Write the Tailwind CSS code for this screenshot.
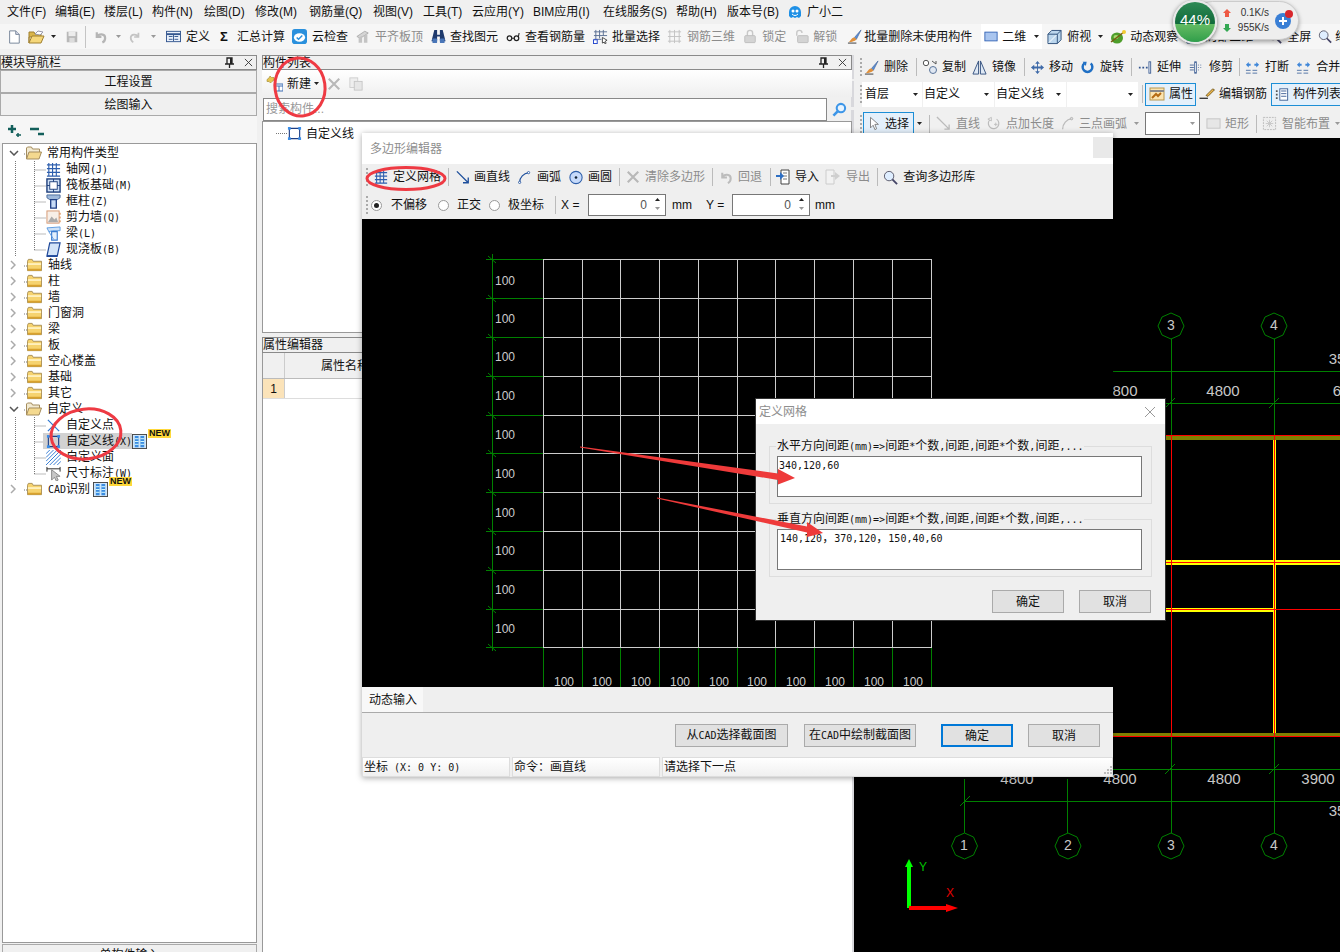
<!DOCTYPE html>
<html lang="zh">
<head>
<meta charset="utf-8">
<script src="https://cdn.jsdelivr.net/npm/@tailwindcss/browser@4"></script>
<title>GTJ</title>
</head>
<body class="m-0">
<svg class="absolute w-0 h-0" aria-hidden="true">
<defs>
<symbol id="doc" viewBox="0 0 16 16"><path d="M3 1h7l4 4v10H3z" fill="#fff" stroke="#6a7a90"/><path d="M10 1v4h4" fill="#dde" stroke="#6a7a90"/></symbol>
<symbol id="open" viewBox="0 0 17 16"><path d="M1 14V3h5l1 2h6v3H1z" fill="#d9b54a" stroke="#a08030"/><path d="M7 5l3-3 5 1-3 3z" fill="#fff" stroke="#99a"/><path d="M1 14l3-7h12l-3 7z" fill="#f5d77a" stroke="#a08030"/></symbol>
<symbol id="save" viewBox="0 0 16 16"><rect x="2" y="2" width="12" height="12" fill="#b8b8b8"/><rect x="4" y="2" width="8" height="5" fill="#ececec"/><rect x="5" y="9" width="6" height="5" fill="#dcdcdc"/></symbol>
<symbol id="undo" viewBox="0 0 14 16"><path d="M3 3v5h5M3 8c2-4 9-4 9 1 0 2-1 4-3 5" fill="none" stroke="#b5b5b5" stroke-width="2.4"/></symbol>
<symbol id="redo" viewBox="0 0 14 16"><path d="M11 3v5H6M11 8C9 4 2 4 2 9c0 2 1 4 3 5" fill="none" stroke="#c4c4c4" stroke-width="2"/></symbol>
<symbol id="def" viewBox="0 0 16 16"><rect x=".5" y="2.5" width="15" height="11" fill="#eaf1fb" stroke="#33568f"/><path d="M1 5.5h14" stroke="#33568f" stroke-width="2"/><path d="M3 8h4M3 11h4M9 8h4M9 11h4M8 6v7" stroke="#33568f"/></symbol>
<symbol id="cloud" viewBox="0 0 16 16"><rect width="16" height="16" rx="3" fill="#2a90dd"/><ellipse cx="8" cy="9" rx="6" ry="4.5" fill="#fff"/><path d="M5 9l2 2 4-4" fill="none" stroke="#2a90dd" stroke-width="1.6"/></symbol>
<symbol id="flat" viewBox="0 0 16 16"><path d="M1 8l9-6 4 2-9 6z" fill="#d5d5d5" stroke="#aaa"/><path d="M3 15V9l4-2v8zM9 15V7l4-2v10z" fill="#c4c4c4"/></symbol>
<symbol id="binoc" viewBox="0 0 17 16"><path d="M4 1h3v5h3V1h3l3 12h-6V8H7v5H1z" fill="#1f3a6d"/><rect x="2" y="10" width="5" height="5" rx="1" fill="#4a76b8"/><rect x="10" y="10" width="5" height="5" rx="1" fill="#4a76b8"/></symbol>
<symbol id="glass" viewBox="0 0 16 16"><circle cx="4" cy="10" r="2.6" fill="none" stroke="#222" stroke-width="1.4"/><circle cx="12" cy="10" r="2.6" fill="none" stroke="#222" stroke-width="1.4"/><path d="M6.5 10h3M14 9l1-5" stroke="#222" stroke-width="1.2"/></symbol>
<symbol id="batch" viewBox="0 0 16 16"><path d="M3 1v11M7 1v9M11 1v6M1 3h14M1 7h14M1 11h8" stroke="#5a6f92" fill="none"/><rect x="0.5" y="11.5" width="4" height="4" fill="#fff" stroke="#2244cc"/><path d="M10 9l5 3-2 1 1 2-1 1-1-2-2 1z" fill="#fff" stroke="#444"/></symbol>
<symbol id="rebar" viewBox="0 0 16 16"><path d="M1 3h14M1 8h14M1 13h14M3 1v14M8 1v14M13 1v14" stroke="#c2c2c2" fill="none"/></symbol>
<symbol id="lock" viewBox="0 0 16 16"><path d="M5 7V4a3 3 0 0 1 6 0v3" fill="none" stroke="#c8c8c8" stroke-width="1.6"/><rect x="2" y="7" width="12" height="8" rx="1" fill="#d4d4d4" stroke="#bbb"/></symbol>
<symbol id="unlock" viewBox="0 0 16 16"><path d="M2 7V4a3 3 0 0 1 6 0" fill="none" stroke="#c8c8c8" stroke-width="1.6"/><rect x="3" y="7" width="12" height="8" rx="1" fill="#d4d4d4" stroke="#bbb"/></symbol>
<symbol id="brush" viewBox="0 0 16 16"><path d="M15 1L8 9l2 2z" fill="#5b8fd6" stroke="#34568f" stroke-width=".6"/><path d="M8 9c-3 0-4 3-6 5 3 0 7-1 8-3z" fill="#e0903a"/><path d="M1 15h9" stroke="#333"/></symbol>
<symbol id="rect2d" viewBox="0 0 16 16"><rect x="1" y="3" width="14" height="10" fill="#a9c5ef" stroke="#2f5fb3"/></symbol>
<symbol id="cube" viewBox="0 0 16 16"><path d="M1 5l4-4h10v10l-4 4H1z" fill="#bcd7ee" stroke="#2d4f7a"/><path d="M1 5h10v10M11 5l4-4" fill="none" stroke="#2d4f7a"/><path d="M2 14l8-8" stroke="#fff"/></symbol>
<symbol id="ball" viewBox="0 0 16 16"><ellipse cx="7" cy="9" rx="6" ry="5.5" fill="#4f9e2c"/><ellipse cx="6" cy="8" rx="2.5" ry="2" fill="#a6dd6e"/><path d="M1 13L14 3" stroke="#7a5a14" stroke-width="1.5"/><circle cx="14" cy="3" r="2" fill="#f2cc33"/></symbol>
<symbol id="mag" viewBox="0 0 16 16"><circle cx="6.500" cy="6.500" r="5" fill="#dfeeff" stroke="#556"/><path d="M10 10l5 5" stroke="#446" stroke-width="2"/></symbol>
<symbol id="magb" viewBox="0 0 16 16"><circle cx="9.500" cy="6.500" r="4.500" fill="#e8f4ff" stroke="#3d96e8" stroke-width="2.2"/><path d="M6 10l-4.500 4.500" stroke="#3d96e8" stroke-width="2.800"/></symbol>
<symbol id="folder" viewBox="0 0 16 14"><path d="M.5 13V3l1-2h4l1 2h9v10z" fill="#f6d36f" stroke="#a98f55"/><path d="M1 5h14v2H1z" fill="#fff0bd"/><path d="M1 11h14v2H1z" fill="#d9a22e"/></symbol>
<symbol id="fopen" viewBox="0 0 16 14"><path d="M.5 13V2l1-1h4l1 2h7v3" fill="#f2ead2" stroke="#a58d5e"/><path d="M.5 13L3 6h12.500L13 13z" fill="#f4d98f" stroke="#a58d5e"/></symbol>
<symbol id="cline" viewBox="0 0 16 16"><path d="M2.500 2.500h11v11h-11z" fill="none" stroke="#1c3d84" stroke-width="1.200"/><path d="M1 1h3v3H1zM12 1h3v3h-3zM1 12h3v3H1zM12 12h3v3h-3z" fill="#3c8fe8"/></symbol>
<symbol id="bars" viewBox="0 0 16 16"><rect x=".5" y=".5" width="15" height="15" fill="#cfe6fb" stroke="#444"/><path d="M3 2h4v12H3zM9 2h4v12H9z" fill="#3b8ce0"/><path d="M3 5h4M3 8h4M3 11h4M9 5h4M9 8h4M9 11h4" stroke="#dff" /></symbol>
<symbol id="grid" viewBox="0 0 16 16"><path d="M1 3h14M1 7h14M1 11h14M1 15h14M3 1v14M7 1v14M11 1v14" stroke="#2e5fae" stroke-width="1.200" fill="none"/></symbol>
<symbol id="cx" viewBox="0 0 16 16"><path d="M2 2l12 12M14 2L2 14" stroke="#b8b8b8" stroke-width="2.400"/></symbol>
<symbol id="cp" viewBox="0 0 16 16"><rect x="1" y="1" width="9" height="11" fill="#eee" stroke="#ccc"/><rect x="6" y="5" width="9" height="10" fill="#e6e6e6" stroke="#c4c4c4"/></symbol>
<symbol id="caret" viewBox="0 0 5 3"><path d="M0 0h5L2.500 3z" fill="#222"/></symbol>
<symbol id="caretg" viewBox="0 0 5 3"><path d="M0 0h5L2.500 3z" fill="#999"/></symbol>
<symbol id="pin" viewBox="0 0 10 12"><path d="M3 1h5v6H3zM1 7h9M5.500 7v4" fill="none" stroke="#222" stroke-width="1.300"/><path d="M6 1h2v6H6z" fill="#222"/></symbol>
<symbol id="close" viewBox="0 0 10 10"><path d="M1 1l8 8M9 1L1 9" stroke="#333"/></symbol>
<symbol id="copy2" viewBox="0 0 16 16"><circle cx="4" cy="4" r="2.700" fill="#fff" stroke="#555"/><circle cx="11" cy="11" r="3.500" fill="#dfe7f2" stroke="#5a7499"/><path d="M10 2l4 3M14 2v3" stroke="#555" fill="none"/></symbol>
<symbol id="mirror" viewBox="0 0 16 16"><path d="M7 1L1 15h6zM9 1l6 14H9z" fill="#dfe9f5" stroke="#35527f"/></symbol>
<symbol id="move" viewBox="0 0 16 16"><path d="M8 1l2.500 3h-2v3h3V5L15 8l-3.500 3V9h-3v3h2L8 15l-2.500-3h2V9h-3v2L1 8l3.500-3v2h3V4h-2z" fill="#3f6aa8"/></symbol>
<symbol id="rot" viewBox="0 0 16 16"><path d="M4 3a6 6 0 1 0 8 0" fill="none" stroke="#1f6fc4" stroke-width="3"/><path d="M2 1l5 0-1 5z" fill="#1f6fc4"/></symbol>
<symbol id="ext" viewBox="0 0 16 16"><path d="M1 7h2v2H1zM5 7h2v2H5zM9 7h2v2H9z" fill="#34568f"/><rect x="12.500" y="1.500" width="2" height="13" fill="#fff" stroke="#34568f"/></symbol>
<symbol id="trim" viewBox="0 0 16 16"><path d="M1 5h5M1 8h5M1 11h5M11 5h1M14 5h1M11 8h1M14 8h1M11 11h1" stroke="#34568f"/><rect x="7" y="1" width="2" height="14" fill="#fff" stroke="#34568f"/></symbol>
<symbol id="brk" viewBox="0 0 16 16"><path d="M1 11h14M1 14h14" stroke="#5173a5" stroke-dasharray="5 2"/><path d="M1 5l3-3v2h2v2H4v2zM15 5l-3-3v2h-2v2h2v2z" fill="#3f86d8"/></symbol>
<symbol id="attr" viewBox="0 0 16 16"><rect x="1" y="2" width="14" height="12" fill="#fbe4b0" stroke="#b7964f"/><path d="M1 5h14" stroke="#888" stroke-width="2"/><path d="M3 12l4-4 2 2 3-3" stroke="#b56b12" stroke-width="2" fill="none"/></symbol>
<symbol id="edit" viewBox="0 0 16 16"><path d="M14 2l-7 7 2 1 7-7z" fill="#efb74a" stroke="#775d20"/><path d="M0 12h9" stroke="#111" stroke-width="1.200"/></symbol>
<symbol id="list" viewBox="0 0 16 16"><rect x="5.500" y="1.500" width="9" height="13" fill="#fff" stroke="#33568f"/><path d="M7 4h6M7 7h6M7 10h6" stroke="#33568f"/><path d="M1 3h2v2H1zM1 7h2v2H1zM1 11h2v2H1z" fill="#555"/></symbol>
<symbol id="cursor" viewBox="0 0 16 16"><path d="M4 1v12l3-3 2 5 2-1-2-5h4z" fill="#fff" stroke="#777"/></symbol>
<symbol id="gline" viewBox="0 0 16 16"><path d="M1 1l13 13M14 9v5H9" fill="none" stroke="#bbb" stroke-width="1.400"/></symbol>
<symbol id="gpt" viewBox="0 0 16 16"><path d="M3 4a6 6 0 1 0 8-1" fill="none" stroke="#bbb" stroke-width="1.300"/><path d="M1 3l4-2v4zM8 9h4M10 7v4" stroke="#bbb" fill="none"/></symbol>
<symbol id="garc" viewBox="0 0 16 16"><path d="M2 15C2 8 7 3 13 2" fill="none" stroke="#bbb" stroke-width="1.600"/><circle cx="13" cy="2" r="1.500" fill="#ddd" stroke="#aaa"/></symbol>
<symbol id="grect" viewBox="0 0 16 16"><rect x="1" y="3" width="14" height="10" fill="#e6e6e6" stroke="#c4c4c4"/></symbol>
<symbol id="smart" viewBox="0 0 16 16"><rect x="1.500" y="1.500" width="13" height="13" fill="#eee" stroke="#bbb" stroke-dasharray="2 1"/><path d="M8 4v8M4 8h8M5 5l6 6M11 5l-6 6" stroke="#c8c8c8"/></symbol>
<symbol id="line" viewBox="0 0 16 16"><path d="M1 1l13 13M14 8v6H8" fill="none" stroke="#1e4f9c" stroke-width="1.500"/></symbol>
<symbol id="arc" viewBox="0 0 16 16"><path d="M2 14C2 8 7 3 13 2" fill="none" stroke="#1e4f9c" stroke-width="1.400"/><circle cx="13" cy="2" r="1.400" fill="#fff" stroke="#1e4f9c"/><circle cx="2" cy="14" r="1.400" fill="#fff" stroke="#1e4f9c"/></symbol>
<symbol id="circ" viewBox="0 0 16 16"><circle cx="8" cy="8" r="7" fill="#c6dafa" stroke="#2c5da8" stroke-width="1.200"/><circle cx="8" cy="8" r="1.500" fill="#123"/></symbol>
<symbol id="imp" viewBox="0 0 16 16"><path d="M6 1h8v14H6z" fill="#fff" stroke="#444"/><path d="M8 4h4M8 7h4M8 10h4" stroke="#777"/><path d="M1 6h4V3l4 4-4 4V8H1z" fill="#2e6fc4"/></symbol>
<symbol id="exp" viewBox="0 0 16 16"><path d="M1 1h8v14H1z" fill="#f2f2f2" stroke="#ccc"/><path d="M6 6h4V3l5 4-5 4V8H6z" fill="#cfcfcf"/></symbol>
<symbol id="gundo" viewBox="0 0 14 16"><path d="M3 3v5h5M3 8c2-4 9-4 9 1 0 2-1 4-3 5" fill="none" stroke="#bcbcbc" stroke-width="2.200"/></symbol>
</defs>
</svg>

<div class="relative w-[1340px] h-[952px] overflow-hidden flex flex-col bg-[#f0f0f0] text-[12px] leading-[16px] text-[#111] font-['Liberation_Sans','Noto_Sans_CJK_SC',sans-serif]">

  <!-- menu -->
  <nav class="h-[24px] shrink-0 flex items-center pl-[7px] whitespace-nowrap">
    <span class="w-[48px] shrink-0">文件(F)</span><span class="w-[49px] shrink-0">编辑(E)</span><span class="w-[48px] shrink-0">楼层(L)</span><span class="w-[52px] shrink-0">构件(N)</span><span class="w-[51px] shrink-0">绘图(D)</span><span class="w-[54px] shrink-0">修改(M)</span><span class="w-[64px] shrink-0">钢筋量(Q)</span><span class="w-[50px] shrink-0">视图(V)</span><span class="w-[49px] shrink-0">工具(T)</span><span class="w-[61px] shrink-0">云应用(Y)</span><span class="w-[70px] shrink-0">BIM应用(I)</span><span class="w-[73px] shrink-0">在线服务(S)</span><span class="w-[51px] shrink-0">帮助(H)</span><span class="w-[60px] shrink-0">版本号(B)</span>
    <svg class="w-[16px] h-[16px] shrink-0" viewBox="0 0 16 16"><path d="M2 8a6 6 0 0 1 12 0v4l-2 2-2-1-2 1-2-1-2 1-2-2z" fill="#1e90e6"/><circle cx="6" cy="7" r="1.500" fill="#fff"/><circle cx="10" cy="7" r="1.500" fill="#fff"/><path d="M5 10c2 2 4 2 6 0" stroke="#fff" fill="none"/></svg>
    <span class="ml-[4px]">广小二</span>
  </nav>

  <!-- main toolbar -->
  <div class="h-[25px] shrink-0 flex items-center bg-[#f6f6f6] whitespace-nowrap">
    <svg class="w-[14px] h-[16px] shrink-0 ml-[7px]"><use href="#doc"/></svg>
    <svg class="w-[17px] h-[16px] shrink-0 ml-[7px]"><use href="#open"/></svg>
    <svg class="w-[5px] h-[3px] shrink-0 ml-[6px]"><use href="#caret"/></svg>
    <svg class="w-[14px] h-[16px] shrink-0 ml-[9px]"><use href="#save"/></svg>
    <div class="w-px h-[22px] bg-[#c4c4c4] shrink-0 ml-[6px]"></div>
    <svg class="w-[13px] h-[16px] shrink-0 ml-[8px]"><use href="#undo"/></svg>
    <svg class="w-[5px] h-[3px] shrink-0 ml-[9px]"><use href="#caretg"/></svg>
    <svg class="w-[12px] h-[16px] shrink-0 ml-[8px]"><use href="#redo"/></svg>
    <svg class="w-[5px] h-[3px] shrink-0 ml-[10px]"><use href="#caretg"/></svg>
    <svg class="w-[15px] h-[15px] shrink-0 ml-[10px]"><use href="#def"/></svg><span class="ml-[5px]">定义</span>
    <span class="ml-[10px] w-[10px] shrink-0 font-bold text-[13px]">Σ</span><span class="ml-[7px]">汇总计算</span>
    <svg class="w-[15px] h-[15px] shrink-0 ml-[7px]"><use href="#cloud"/></svg><span class="ml-[5px]">云检查</span>
    <svg class="w-[14px] h-[15px] shrink-0 ml-[8px]"><use href="#flat"/></svg><span class="ml-[5px] text-[#8c8c8c]">平齐板顶</span>
    <svg class="w-[17px] h-[15px] shrink-0 ml-[7px]"><use href="#binoc"/></svg><span class="ml-[3px]">查找图元</span>
    <svg class="w-[14px] h-[15px] shrink-0 ml-[8px]"><use href="#glass"/></svg><span class="ml-[5px]">查看钢筋量</span>
    <svg class="w-[15px] h-[15px] shrink-0 ml-[8px]"><use href="#batch"/></svg><span class="ml-[4px]">批量选择</span>
    <svg class="w-[15px] h-[15px] shrink-0 ml-[7px]"><use href="#rebar"/></svg><span class="ml-[5px] text-[#8c8c8c]">钢筋三维</span>
    <svg class="w-[14px] h-[15px] shrink-0 ml-[8px]"><use href="#lock"/></svg><span class="ml-[5px] text-[#8c8c8c]">锁定</span>
    <svg class="w-[14px] h-[15px] shrink-0 ml-[9px]"><use href="#unlock"/></svg><span class="ml-[4px] text-[#8c8c8c]">解锁</span>
    <svg class="w-[15px] h-[15px] shrink-0 ml-[10px]"><use href="#brush"/></svg><span class="ml-[2px]">批量删除未使用构件</span>
    <div class="ml-[9px] w-[61px] h-[25px] shrink-0 bg-white flex items-center pl-[3px]">
      <svg class="w-[14px] h-[15px] shrink-0"><use href="#rect2d"/></svg><span class="ml-[4px]">二维</span>
      <svg class="w-[5px] h-[3px] shrink-0 ml-[8px]"><use href="#caret"/></svg>
    </div>
    <svg class="w-[15px] h-[16px] shrink-0 ml-[5px]"><use href="#cube"/></svg><span class="ml-[5px]">俯视</span>
    <svg class="w-[5px] h-[3px] shrink-0 ml-[7px]"><use href="#caret"/></svg>
    <svg class="w-[16px] h-[16px] shrink-0 ml-[7px]"><use href="#ball"/></svg><span class="ml-[4px]">动态观察</span>
    <svg class="w-[15px] h-[15px] shrink-0 ml-[8px]"><use href="#cube"/></svg><span class="ml-[4px]">局部三维</span>
    <svg class="w-[15px] h-[15px] shrink-0 ml-[14px]"><use href="#mag"/></svg><span class="ml-[5px]">全屏</span>
    <svg class="w-[14px] h-[15px] shrink-0 ml-[7px]"><use href="#mag"/></svg><span class="ml-[3px]">缩放</span>
  </div>

  <!-- body -->
  <div class="flex-1 min-h-0 flex pt-[6px]">

    <!-- left panel -->
    <aside class="w-[257px] shrink-0 flex flex-col min-h-0">
      <div class="h-[15px] shrink-0 border border-[#8a8a8a] flex items-center justify-between pr-[3px] whitespace-nowrap">
        <span>模块导航栏</span>
        <span class="flex items-center gap-[10px]"><svg class="w-[10px] h-[12px]"><use href="#pin"/></svg><svg class="w-[9px] h-[9px]"><use href="#close"/></svg></span>
      </div>
      <button class="h-[23px] shrink-0 border border-[#aaa] bg-[#f0f0f0]">工程设置</button>
      <button class="h-[23px] shrink-0 border border-[#aaa] bg-[#f0f0f0]">绘图输入</button>
      <div class="h-[27px] shrink-0 flex items-center gap-[6px] pl-[7px] bg-[#f6f6f6]">
        <svg class="w-[16px] h-[14px]" viewBox="0 0 16 14"><path d="M5 2v8M1 6h8" stroke="#135f5b" stroke-width="2.500"/><path d="M11 10v4M9 12h5" stroke="#135f5b" stroke-width="1.500"/></svg>
        <svg class="w-[16px] h-[14px]" viewBox="0 0 16 14"><path d="M1 6h9M9 11h6" stroke="#135f5b" stroke-width="2.500"/></svg>
      </div>
      <div class="relative flex-1 min-h-0 ml-[2px] bg-white border border-[#999] pt-[1px] whitespace-nowrap">
        <svg class="absolute left-0 top-0 w-[60px] h-[360px]" viewBox="0 0 60 360"><path d="M12.500 17V112M31.500 17V106M31.500 26H43M31.500 42H43M31.500 58H43M31.500 74H43M31.500 90H43M31.500 106H43M21 10H25M21 122H25M21 138H25M21 154H25M21 170H25M21 186H25M21 202H25M21 218H25M21 234H25M21 250H25M21 266H25M12.500 273V336M31.500 273V330M31.500 282H43M31.500 298H43M31.500 314H43M31.500 330H43M21 346H25" stroke="#777" stroke-dasharray="1 1" fill="none"/></svg>
        <div class="relative h-[16px] flex items-center pl-[6px]"><svg class="w-[10px] h-[6px] shrink-0" viewBox="0 0 10 6"><path d="M1 1l4 4 4-4" fill="none" stroke="#555" stroke-width="1.500"/></svg><svg class="w-[16px] h-[14px] shrink-0 ml-[7px]"><use href="#fopen"/></svg><span class="ml-[5px]">常用构件类型</span></div>
        <div class="relative h-[16px] flex items-center pl-[43px]"><svg class="w-[15px] h-[15px] shrink-0"><use href="#grid"/></svg><span class="ml-[5px]">轴网<span class="font-['DejaVu_Sans_Mono'] text-[10px]">(J)</span></span></div>
        <div class="relative h-[16px] flex items-center pl-[43px]"><svg class="w-[15px] h-[15px] shrink-0" viewBox="0 0 16 16"><rect x="1" y="1" width="14" height="14" fill="#cfe0f5" stroke="#1e3f7c" stroke-width="1.500"/><rect x="4" y="4" width="8" height="8" fill="#fff" stroke="#1e3f7c"/><path d="M8 1v3M8 12v3M1 8h3M12 8h3" stroke="#1e3f7c"/></svg><span class="ml-[5px]">筏板基础<span class="font-['DejaVu_Sans_Mono'] text-[10px]">(M)</span></span></div>
        <div class="relative h-[16px] flex items-center pl-[43px]"><svg class="w-[15px] h-[15px] shrink-0" viewBox="0 0 16 16"><path d="M1 1h14v3l-3 2H4L1 4z" fill="#9fb9db" stroke="#4a6b9c"/><path d="M5 6h6v9H5z" fill="#c8dcf6" stroke="#1f3f85" stroke-width="1.400"/></svg><span class="ml-[5px]">框柱<span class="font-['DejaVu_Sans_Mono'] text-[10px]">(Z)</span></span></div>
        <div class="relative h-[16px] flex items-center pl-[43px]"><svg class="w-[15px] h-[15px] shrink-0" viewBox="0 0 16 16"><rect x="1" y="1" width="13" height="13" fill="#f7efe8" stroke="#d59670"/><path d="M2 13l4-6 3 3 2-2 2 5z" fill="#aaa"/><path d="M15 3v2M15 7v2M15 11v2" stroke="#d9772e"/></svg><span class="ml-[5px]">剪力墙<span class="font-['DejaVu_Sans_Mono'] text-[10px]">(Q)</span></span></div>
        <div class="relative h-[16px] flex items-center pl-[43px]"><svg class="w-[15px] h-[15px] shrink-0" viewBox="0 0 16 16"><path d="M1 2l14-1v4H7L3 6z" fill="#cfe2f8" stroke="#5c9adf"/><path d="M6 6h6v9H6z" fill="#e4f0fc" stroke="#3a7bd0" stroke-width="1.200"/><path d="M3 6l5 8" stroke="#5c9adf"/></svg><span class="ml-[5px]">梁<span class="font-['DejaVu_Sans_Mono'] text-[10px]">(L)</span></span></div>
        <div class="relative h-[16px] flex items-center pl-[43px]"><svg class="w-[15px] h-[15px] shrink-0" viewBox="0 0 16 16"><path d="M4 1h11l-3 14H1z" fill="#d3e4f8" stroke="#214a9b" stroke-width="1.300"/><path d="M1 15h11" stroke="#214a9b" stroke-width="2"/></svg><span class="ml-[5px]">现浇板<span class="font-['DejaVu_Sans_Mono'] text-[10px]">(B)</span></span></div>
        <div class="relative h-[16px] flex items-center pl-[7px]"><svg class="w-[6px] h-[10px] shrink-0" viewBox="0 0 6 10"><path d="M1 1l4 4-4 4" fill="none" stroke="#aaa" stroke-width="1.500"/></svg><svg class="w-[15px] h-[14px] shrink-0 ml-[11px]"><use href="#folder"/></svg><span class="ml-[6px]">轴线</span></div>
        <div class="relative h-[16px] flex items-center pl-[7px]"><svg class="w-[6px] h-[10px] shrink-0" viewBox="0 0 6 10"><path d="M1 1l4 4-4 4" fill="none" stroke="#aaa" stroke-width="1.500"/></svg><svg class="w-[15px] h-[14px] shrink-0 ml-[11px]"><use href="#folder"/></svg><span class="ml-[6px]">柱</span></div>
        <div class="relative h-[16px] flex items-center pl-[7px]"><svg class="w-[6px] h-[10px] shrink-0" viewBox="0 0 6 10"><path d="M1 1l4 4-4 4" fill="none" stroke="#aaa" stroke-width="1.500"/></svg><svg class="w-[15px] h-[14px] shrink-0 ml-[11px]"><use href="#folder"/></svg><span class="ml-[6px]">墙</span></div>
        <div class="relative h-[16px] flex items-center pl-[7px]"><svg class="w-[6px] h-[10px] shrink-0" viewBox="0 0 6 10"><path d="M1 1l4 4-4 4" fill="none" stroke="#aaa" stroke-width="1.500"/></svg><svg class="w-[15px] h-[14px] shrink-0 ml-[11px]"><use href="#folder"/></svg><span class="ml-[6px]">门窗洞</span></div>
        <div class="relative h-[16px] flex items-center pl-[7px]"><svg class="w-[6px] h-[10px] shrink-0" viewBox="0 0 6 10"><path d="M1 1l4 4-4 4" fill="none" stroke="#aaa" stroke-width="1.500"/></svg><svg class="w-[15px] h-[14px] shrink-0 ml-[11px]"><use href="#folder"/></svg><span class="ml-[6px]">梁</span></div>
        <div class="relative h-[16px] flex items-center pl-[7px]"><svg class="w-[6px] h-[10px] shrink-0" viewBox="0 0 6 10"><path d="M1 1l4 4-4 4" fill="none" stroke="#aaa" stroke-width="1.500"/></svg><svg class="w-[15px] h-[14px] shrink-0 ml-[11px]"><use href="#folder"/></svg><span class="ml-[6px]">板</span></div>
        <div class="relative h-[16px] flex items-center pl-[7px]"><svg class="w-[6px] h-[10px] shrink-0" viewBox="0 0 6 10"><path d="M1 1l4 4-4 4" fill="none" stroke="#aaa" stroke-width="1.500"/></svg><svg class="w-[15px] h-[14px] shrink-0 ml-[11px]"><use href="#folder"/></svg><span class="ml-[6px]">空心楼盖</span></div>
        <div class="relative h-[16px] flex items-center pl-[7px]"><svg class="w-[6px] h-[10px] shrink-0" viewBox="0 0 6 10"><path d="M1 1l4 4-4 4" fill="none" stroke="#aaa" stroke-width="1.500"/></svg><svg class="w-[15px] h-[14px] shrink-0 ml-[11px]"><use href="#folder"/></svg><span class="ml-[6px]">基础</span></div>
        <div class="relative h-[16px] flex items-center pl-[7px]"><svg class="w-[6px] h-[10px] shrink-0" viewBox="0 0 6 10"><path d="M1 1l4 4-4 4" fill="none" stroke="#aaa" stroke-width="1.500"/></svg><svg class="w-[15px] h-[14px] shrink-0 ml-[11px]"><use href="#folder"/></svg><span class="ml-[6px]">其它</span></div>
        <div class="relative h-[16px] flex items-center pl-[6px]"><svg class="w-[10px] h-[6px] shrink-0" viewBox="0 0 10 6"><path d="M1 1l4 4 4-4" fill="none" stroke="#555" stroke-width="1.500"/></svg><svg class="w-[16px] h-[14px] shrink-0 ml-[7px]"><use href="#fopen"/></svg><span class="ml-[5px]">自定义</span></div>
        <div class="relative h-[16px] flex items-center pl-[43px]"><svg class="w-[15px] h-[15px] shrink-0" viewBox="0 0 16 16"><path d="M2 2l12 12M14 2L2 14" stroke="#2f78d2" stroke-width="1.300"/></svg><span class="ml-[5px]">自定义点</span></div>
        <div class="relative h-[16px] flex items-center pl-[43px]"><span class="flex items-center bg-[#d2d2d2] h-[16px] ml-[-3px] pl-[3px] w-[89px]"><svg class="w-[15px] h-[15px] shrink-0"><use href="#cline"/></svg><span class="ml-[5px]">自定义线<span class="font-['DejaVu_Sans_Mono'] text-[10px]">(X)</span></span></span><svg class="w-[15px] h-[15px] shrink-0"><use href="#bars"/></svg><span class="self-start mt-[-4px] ml-[1px] h-[9px] px-[1px] bg-[#ffd83a] text-[9px] leading-[9px] font-bold">NEW</span></div>
        <div class="relative h-[16px] flex items-center pl-[43px]"><svg class="w-[15px] h-[15px] shrink-0" viewBox="0 0 16 16"><path d="M0 4l4-4M0 8l8-8M0 12L12 0M0 16L16 0M4 16L16 4M8 16l8-8M12 16l4-4" stroke="#2f78d2"/></svg><span class="ml-[5px]">自定义面</span></div>
        <div class="relative h-[16px] flex items-center pl-[43px]"><svg class="w-[15px] h-[15px] shrink-0" viewBox="0 0 16 16"><path d="M1 1v5M15 1v5M1 3h14" stroke="#222"/><path d="M6 4v11l3-3 2 4 2-1-2-4h4z" fill="#c8c8c8" stroke="#888"/></svg><span class="ml-[5px]">尺寸标注<span class="font-['DejaVu_Sans_Mono'] text-[10px]">(W)</span></span></div>
        <div class="relative h-[16px] flex items-center pl-[7px]"><svg class="w-[6px] h-[10px] shrink-0" viewBox="0 0 6 10"><path d="M1 1l4 4-4 4" fill="none" stroke="#aaa" stroke-width="1.500"/></svg><svg class="w-[15px] h-[14px] shrink-0 ml-[11px]"><use href="#folder"/></svg><span class="ml-[6px]"><span class="font-['DejaVu_Sans_Mono'] text-[10px]">CAD</span>识别</span><svg class="w-[15px] h-[15px] shrink-0 ml-[3px]"><use href="#bars"/></svg><span class="self-start mt-[-4px] ml-[1px] h-[9px] px-[1px] bg-[#ffd83a] text-[9px] leading-[9px] font-bold">NEW</span></div>
      </div>
      <button class="h-[22px] shrink-0 ml-[2px] mt-[1px] mb-[-14px] border border-[#aaa] bg-[#f0f0f0]">单构件输入</button>
    </aside>

    <!-- middle panel -->
    <section class="w-[590px] shrink-0 ml-[5px] flex flex-col min-h-0 relative">
      <div class="h-[15px] shrink-0 border border-[#8a8a8a] flex items-center justify-between pr-[4px] whitespace-nowrap">
        <span>构件列表</span>
        <span class="flex items-center gap-[10px]"><svg class="w-[10px] h-[12px]"><use href="#pin"/></svg><svg class="w-[9px] h-[9px]"><use href="#close"/></svg></span>
      </div>
      <div class="h-[27px] shrink-0 flex items-center pl-[4px] bg-gradient-to-b from-white to-[#efefef] whitespace-nowrap">
        <svg class="w-[17px] h-[17px] shrink-0" viewBox="0 0 17 17"><path d="M4 1l1.500 1.500H8V5L6 6.500 4.500 8 3 6.500H1V4.500L3 3z" fill="#e6c54e" stroke="#9c8733" stroke-width=".6"/><rect x="9" y="9" width="8" height="7" fill="#fff" stroke="#3f6fb4"/><path d="M9 11h8M13 11v5" stroke="#3f6fb4"/></svg>
        <span class="ml-[4px]">新建</span>
        <svg class="w-[5px] h-[3px] shrink-0 ml-[3px]"><use href="#caret"/></svg>
        <svg class="w-[14px] h-[14px] shrink-0 ml-[8px]"><use href="#cx"/></svg>
        <svg class="w-[14px] h-[14px] shrink-0 ml-[8px]"><use href="#cp"/></svg>
      </div>
      <div class="h-[24px] shrink-0 flex items-center">
        <div class="w-[564px] ml-[1px] h-[23px] border border-[#888] bg-white flex items-center pl-[2px] text-[#999]">搜索构件...</div>
        <svg class="w-[15px] h-[15px] ml-[5px]"><use href="#magb"/></svg>
      </div>
      <div class="h-[212px] shrink-0 bg-white border border-[#999] flex items-start pt-[4px] pl-[13px]">
        <span class="w-[11px] h-[8px] border-b border-dotted border-[#777]"></span>
        <svg class="w-[15px] h-[15px] shrink-0"><use href="#cline"/></svg>
        <span class="ml-[4px]">自定义线</span>
      </div>
      <div class="h-[16px] mt-[4px] shrink-0 border border-[#8a8a8a] flex items-center whitespace-nowrap">属性编辑器</div>
      <div class="flex-1 min-h-0 bg-white border-l border-[#999] flex flex-col">
        <div class="h-[26px] shrink-0 flex bg-[#f0f0f0] border-b border-[#bbb]">
          <span class="w-[22px] border-r border-[#ccc]"></span>
          <span class="w-[120px] pl-[36px] flex items-center whitespace-nowrap">属性名称</span>
        </div>
        <div class="h-[20px] shrink-0 flex border-b border-[#ddd]">
          <span class="w-[22px] bg-[#fbe3b9] border-r border-[#ccc] flex items-center justify-center">1</span>
        </div>
      </div>
    </section>

    <!-- right panel -->
    <section class="flex-1 min-w-0 ml-[-1px] flex flex-col whitespace-nowrap">
      <div class="h-[24px] shrink-0 flex items-center pl-[6px] border-l-[3px] border-[#d8d8dc] overflow-hidden">
        <span class="h-[18px] border-l-2 border-dotted border-[#aaa] shrink-0"></span>
        <svg class="w-[15px] h-[15px] shrink-0 ml-[2px]"><use href="#brush"/></svg><span class="ml-[5px]">删除</span>
        <div class="w-px h-[18px] bg-[#bbb] shrink-0 ml-[8px]"></div>
        <svg class="w-[16px] h-[16px] shrink-0 ml-[5px]"><use href="#copy2"/></svg><span class="ml-[4px]">复制</span>
        <svg class="w-[15px] h-[15px] shrink-0 ml-[6px]"><use href="#mirror"/></svg><span class="ml-[5px]">镜像</span>
        <div class="w-px h-[18px] bg-[#bbb] shrink-0 ml-[8px]"></div>
        <svg class="w-[15px] h-[15px] shrink-0 ml-[5px]"><use href="#move"/></svg><span class="ml-[4px]">移动</span>
        <svg class="w-[13px] h-[15px] shrink-0 ml-[8px]"><use href="#rot"/></svg><span class="ml-[6px]">旋转</span>
        <div class="w-px h-[18px] bg-[#bbb] shrink-0 ml-[7px]"></div>
        <svg class="w-[14px] h-[15px] shrink-0 ml-[6px]"><use href="#ext"/></svg><span class="ml-[5px]">延伸</span>
        <svg class="w-[13px] h-[15px] shrink-0 ml-[8px]"><use href="#trim"/></svg><span class="ml-[7px]">修剪</span>
        <div class="w-px h-[18px] bg-[#bbb] shrink-0 ml-[6px]"></div>
        <svg class="w-[15px] h-[15px] shrink-0 ml-[5px]"><use href="#brk"/></svg><span class="ml-[5px]">打断</span>
        <svg class="w-[15px] h-[15px] shrink-0 ml-[7px]"><use href="#brk"/></svg><span class="ml-[5px]">合并</span>
      </div>
      <div class="h-[26px] mt-[2px] shrink-0 flex items-center pl-[6px] border-l-[3px] border-[#d8d8dc] overflow-hidden">
        <span class="h-[18px] border-l-2 border-dotted border-[#aaa] shrink-0"></span>
        <span class="w-[60px] h-[25px] shrink-0 bg-white flex items-center pl-[3px] justify-between pr-[4px]">首层<svg class="w-[5px] h-[3px]"><use href="#caret"/></svg></span>
        <span class="ml-[1px] w-[71px] h-[25px] shrink-0 bg-white flex items-center pl-[1px] justify-between pr-[5px]">自定义<svg class="w-[5px] h-[3px]"><use href="#caret"/></svg></span>
        <span class="ml-[1px] w-[71px] h-[25px] shrink-0 bg-white flex items-center pl-[1px] justify-between pr-[5px]">自定义线<svg class="w-[5px] h-[3px]"><use href="#caret"/></svg></span>
        <span class="ml-[1px] w-[71px] h-[25px] shrink-0 bg-white flex items-center justify-end pr-[5px]"><svg class="w-[5px] h-[3px]"><use href="#caret"/></svg></span>
        <div class="w-px h-[18px] bg-[#bbb] shrink-0 ml-[4px]"></div>
        <span class="ml-[2px] w-[51px] h-[23px] shrink-0 border border-[#1c8ed6] bg-[#e4f0fb] flex items-center pl-[3px]"><svg class="w-[16px] h-[16px]"><use href="#attr"/></svg><span class="ml-[4px]">属性</span></span>
        <svg class="w-[16px] h-[15px] shrink-0 ml-[3px]"><use href="#edit"/></svg><span class="ml-[4px]">编辑钢筋</span>
        <span class="ml-[4px] w-[70px] h-[23px] shrink-0 border border-[#1c8ed6] bg-[#e4f0fb] flex items-center pl-[3px]"><svg class="w-[14px] h-[15px] shrink-0"><use href="#list"/></svg><span class="ml-[4px]">构件列表</span></span>
      </div>
      <div class="h-[27px] mt-[3px] shrink-0 flex items-center pl-[6px] border-l-[3px] border-[#d8d8dc] overflow-hidden">
        <span class="h-[18px] border-l-2 border-dotted border-[#aaa] shrink-0"></span>
        <span class="w-[51px] h-[24px] ml-[1px] shrink-0 border border-[#1c8ed6] bg-[#e4f0fb] flex items-center pl-[3px]"><svg class="w-[14px] h-[15px]"><use href="#cursor"/></svg><span class="ml-[4px]">选择</span></span>
        <svg class="w-[5px] h-[3px] shrink-0 ml-[3px]"><use href="#caret"/></svg>
        <div class="w-px h-[18px] bg-[#bbb] shrink-0 ml-[7px]"></div>
        <svg class="w-[15px] h-[15px] shrink-0 ml-[6px]"><use href="#gline"/></svg><span class="ml-[5px] text-[#8c8c8c]">直线</span>
        <svg class="w-[14px] h-[15px] shrink-0 ml-[7px]"><use href="#gpt"/></svg><span class="ml-[5px] text-[#8c8c8c]">点加长度</span>
        <svg class="w-[13px] h-[15px] shrink-0 ml-[7px]"><use href="#garc"/></svg><span class="ml-[5px] text-[#8c8c8c]">三点画弧</span>
        <svg class="w-[5px] h-[3px] shrink-0 ml-[7px]"><use href="#caretg"/></svg>
        <span class="ml-[6px] w-[55px] h-[23px] shrink-0 border border-[#777] bg-white flex items-center justify-end pr-[4px]"><svg class="w-[5px] h-[3px]"><use href="#caretg"/></svg></span>
        <svg class="w-[15px] h-[15px] shrink-0 ml-[6px]"><use href="#grect"/></svg><span class="ml-[4px] text-[#8c8c8c]">矩形</span>
        <div class="w-px h-[18px] bg-[#bbb] shrink-0 ml-[7px]"></div>
        <svg class="w-[15px] h-[15px] shrink-0 ml-[5px]"><use href="#smart"/></svg><span class="ml-[5px] text-[#8c8c8c]">智能布置</span>
        <svg class="w-[5px] h-[3px] shrink-0 ml-[5px]"><use href="#caretg"/></svg>
      </div>
      <div class="flex-1 min-h-0 border-l-[3px] border-[#d8d8dc] mt-[1px] bg-black">
        <svg class="w-[486px] h-[815px] block" viewBox="854 137 486 815" font-family="Liberation Sans, sans-serif">
          <g fill="none" stroke="#008000" shape-rendering="crispEdges">
            <path d="M1113 370.500H1340M1113 402.500H1340M1113 768.500H1340M964.500 800.500H1340"/>
            <path d="M1171.500 338V434M1274.500 338V434M1171.500 735V800M1274.500 735V800M964.500 778V832M1067.500 778V832M1171.500 800V832M1274.500 800V832"/>
          </g>
          <g fill="none" stroke="#008000"><path d="M1165 407l10-10M1269 407l10-10M1165 773l10-10M1269 773l10-10M960 805l10-10"/>
            <path d="M1171 312l9 4 4 9-4 9-9 4-9-4-4-9 4-9zM1274 312l9 4 4 9-4 9-9 4-9-4-4-9 4-9zM964.500 832l9 4 4 9-4 9-9 4-9-4-4-9 4-9zM1068 832l9 4 4 9-4 9-9 4-9-4-4-9 4-9zM1171 832l9 4 4 9-4 9-9 4-9-4-4-9 4-9zM1274 832l9 4 4 9-4 9-9 4-9-4-4-9 4-9z"/></g>
          <g shape-rendering="crispEdges">
            <rect x="1113" y="435" width="227" height="4" fill="#808000"/>
            <rect x="1113" y="434" width="227" height="1" fill="#ff0000"/>
            <rect x="1273" y="439" width="3" height="293" fill="#ffff00"/>
            <rect x="1113" y="559" width="227" height="5" fill="#ffff00"/>
            <rect x="1113" y="561" width="227" height="1" fill="#ff0000"/>
            <rect x="1113" y="607" width="161" height="4" fill="#ffff00"/>
            <rect x="1113" y="608" width="227" height="1" fill="#ff0000"/>
            <rect x="1113" y="732" width="227" height="3" fill="#808000"/>
            <rect x="1113" y="735" width="227" height="1" fill="#ff0000"/>
            <rect x="1171" y="434" width="1" height="302" fill="#ff0000"/>
            <rect x="1274" y="434" width="1" height="302" fill="#ff0000"/>
          </g>
          <g fill="#c8c8c8" font-size="15" text-anchor="middle">
            <text x="1125" y="395">800</text><text x="1223" y="395">4800</text><text x="1337" y="395">6</text><text x="1337" y="363">35</text>
            <text x="1017" y="783">4800</text><text x="1120" y="783">4800</text><text x="1224" y="783">4800</text><text x="1318" y="783">3900</text><text x="1337" y="815">35</text>
            <text x="964" y="849" font-size="14">1</text><text x="1068" y="849" font-size="14">2</text><text x="1171" y="849" font-size="14">3</text><text x="1274" y="849" font-size="14">4</text>
            <text x="1171" y="329" font-size="14">3</text><text x="1274" y="329" font-size="14">4</text>
          </g>
          <path d="M907 907V866H905L909 858 913 866H911V907z" fill="#00ff00"/>
          <path d="M909 905H946V903L958 907 946 911V909H909z" fill="#ff0000"/>
          <text x="923" y="870" fill="#00c000" font-size="12" text-anchor="middle">Y</text>
          <text x="950" y="896" fill="#e00000" font-size="12" text-anchor="middle">X</text>
        </svg>
      </div>
    </section>
  </div>

  <!-- polygon editor window -->
  <div class="absolute left-[362px] top-[133px] w-[751px] h-[644px] flex flex-col bg-[#efefef] shadow-[0_1px_6px_rgba(0,0,0,0.35)] whitespace-nowrap">
    <div class="h-[31px] shrink-0 bg-white flex items-center pl-[8px] text-[#8e8e8e] relative">多边形编辑器
      <span class="absolute right-0 top-[4px] w-[20px] h-[21px] bg-[#e9e9e9]"></span></div>
    <div class="h-[26px] shrink-0 flex items-center pl-[4px]">
      <span class="h-[18px] border-l-2 border-dotted border-[#aaa] shrink-0"></span>
      <svg class="w-[14px] h-[14px] shrink-0 ml-[6px]"><use href="#grid"/></svg><span class="ml-[5px]">定义网格</span>
      <div class="w-px h-[18px] bg-[#bbb] shrink-0 ml-[7px]"></div>
      <svg class="w-[14px] h-[15px] shrink-0 ml-[7px]"><use href="#line"/></svg><span class="ml-[4px]">画直线</span>
      <svg class="w-[13px] h-[15px] shrink-0 ml-[8px]"><use href="#arc"/></svg><span class="ml-[6px]">画弧</span>
      <svg class="w-[14px] h-[15px] shrink-0 ml-[8px]"><use href="#circ"/></svg><span class="ml-[5px]">画圆</span>
      <div class="w-px h-[18px] bg-[#bbb] shrink-0 ml-[7px]"></div>
      <svg class="w-[14px] h-[14px] shrink-0 ml-[6px]"><use href="#cx"/></svg><span class="ml-[5px] text-[#8c8c8c]">清除多边形</span>
      <div class="w-px h-[18px] bg-[#bbb] shrink-0 ml-[7px]"></div>
      <svg class="w-[14px] h-[15px] shrink-0 ml-[6px]"><use href="#gundo"/></svg><span class="ml-[5px] text-[#8c8c8c]">回退</span>
      <div class="w-px h-[18px] bg-[#bbb] shrink-0 ml-[8px]"></div>
      <svg class="w-[16px] h-[16px] shrink-0 ml-[4px]"><use href="#imp"/></svg><span class="ml-[4px]">导入</span>
      <svg class="w-[16px] h-[16px] shrink-0 ml-[6px]"><use href="#exp"/></svg><span class="ml-[5px] text-[#8c8c8c]">导出</span>
      <div class="w-px h-[18px] bg-[#bbb] shrink-0 ml-[7px]"></div>
      <svg class="w-[15px] h-[15px] shrink-0 ml-[5px]"><use href="#mag"/></svg><span class="ml-[5px]">查询多边形库</span>
    </div>
    <div class="h-[28px] mt-[1px] shrink-0 flex items-center pl-[4px]">
      <span class="h-[18px] border-l-2 border-dotted border-[#aaa] shrink-0"></span>
      <span class="w-[11px] h-[11px] ml-[3px] rounded-full border border-[#999] bg-white flex items-center justify-center"><span class="w-[5px] h-[5px] rounded-full bg-[#222]"></span></span><span class="ml-[9px]">不偏移</span>
      <span class="w-[11px] h-[11px] ml-[11px] rounded-full border border-[#999] bg-white"></span><span class="ml-[8px]">正交</span>
      <span class="w-[11px] h-[11px] ml-[8px] rounded-full border border-[#999] bg-white"></span><span class="ml-[8px]">极坐标</span>
      <div class="w-px h-[18px] bg-[#bbb] shrink-0 ml-[11px]"></div>
      <span class="ml-[5px] w-[27px]">X =</span>
      <span class="w-[78px] h-[22px] border border-[#777] bg-white flex items-center justify-end pr-[18px] relative text-[#555]">0<span class="absolute right-[5px] top-[3px] flex flex-col gap-[6px]"><svg class="w-[5px] h-[3px] rotate-180"><use href="#caret"/></svg><svg class="w-[5px] h-[3px]"><use href="#caretg"/></svg></span></span>
      <span class="ml-[6px] w-[34px]">mm</span>
      <span class="w-[26px]">Y =</span>
      <span class="w-[78px] h-[22px] border border-[#777] bg-white flex items-center justify-end pr-[18px] relative text-[#555]">0<span class="absolute right-[5px] top-[3px] flex flex-col gap-[6px]"><svg class="w-[5px] h-[3px] rotate-180"><use href="#caret"/></svg><svg class="w-[5px] h-[3px]"><use href="#caretg"/></svg></span></span>
      <span class="ml-[5px]">mm</span>
    </div>
    <div class="h-[468px] shrink-0 bg-black">
      <svg class="w-[751px] h-[468px] block" viewBox="362 219 751 468" font-family="Liberation Sans, sans-serif">
        <g transform="translate(-1,-1)">
          <g fill="none" shape-rendering="crispEdges">
            <path stroke="#008000" d="M486.500 260.500H544M486.500 299.500H544M486.500 338.500H544M486.500 377.500H544M486.500 416.500H544M486.500 454.500H544M486.500 493.500H544M486.500 532.500H544M486.500 571.500H544M486.500 610.500H544M486.500 648.500H544M493.500 255V652M544.500 648V690M583.500 648V690M621.500 648V690M660.500 648V690M699.500 648V690M738.500 648V690M776.500 648V690M815.500 648V690M854.500 648V690M893.500 648V690M932.500 648V690"/>
            <path stroke="#cccccc" d="M544 260.500H933M544 299.500H933M544 338.500H933M544 377.500H933M544 416.500H933M544 454.500H933M544 493.500H933M544 532.500H933M544 571.500H933M544 610.500H933M544 648.500H933M544.500 260V649M583.500 260V649M621.500 260V649M660.500 260V649M699.500 260V649M738.500 260V649M776.500 260V649M815.500 260V649M854.500 260V649M893.500 260V649M932.500 260V649"/>
          </g>
          <path stroke="#008000" d="M489 257l8 7M489 296l8 7M489 335l8 7M489 374l8 7M489 413l8 7M489 451l8 7M489 490l8 7M489 529l8 7M489 568l8 7M489 607l8 7M489 645l8 7"/>
        </g>
        <g fill="#cccccc" font-size="12">
          <text x="495" y="285">100</text><text x="495" y="323">100</text><text x="495" y="361">100</text><text x="495" y="400">100</text><text x="495" y="439">100</text><text x="495" y="478">100</text><text x="495" y="517">100</text><text x="495" y="555">100</text><text x="495" y="594">100</text><text x="495" y="633">100</text>
          <text x="554" y="686">100</text><text x="592" y="686">100</text><text x="631" y="686">100</text><text x="670" y="686">100</text><text x="709" y="686">100</text><text x="747" y="686">100</text><text x="786" y="686">100</text><text x="825" y="686">100</text><text x="864" y="686">100</text><text x="903" y="686">100</text>
        </g>
      </svg>
    </div>
    <div class="h-[26px] shrink-0 flex items-stretch border-b border-[#aaa] mb-[1px]"><span class="w-[61px] h-[25px] bg-[#f8f8f8] flex items-center pl-[7px]">动态输入</span></div>
    <div class="h-[43px] shrink-0 flex items-center justify-end pr-[13px]">
      <button class="w-[113px] h-[23px] border border-[#aaa] bg-[#e1e1e1]">从<span class="font-['DejaVu_Sans_Mono'] text-[10px]">CAD</span>选择截面图</button>
      <button class="w-[112px] h-[23px] ml-[16px] border border-[#aaa] bg-[#e1e1e1]">在<span class="font-['DejaVu_Sans_Mono'] text-[10px]">CAD</span>中绘制截面图</button>
      <button class="w-[72px] h-[23px] ml-[25px] border-2 border-[#0078d7] bg-[#e1e1e1]">确定</button>
      <button class="w-[72px] h-[23px] ml-[15px] border border-[#aaa] bg-[#e1e1e1]">取消</button>
    </div>
    <div class="h-[20px] shrink-0 flex gap-[2px] relative">
      <span class="w-[148px] border border-[#ddd] bg-gradient-to-b from-white to-[#f0f0f0] pl-[1px] flex items-center"><span>坐标<span class="font-['DejaVu_Sans_Mono'] text-[10px] whitespace-pre"> (X: 0 Y: 0)</span></span></span>
      <span class="w-[148px] border border-[#ddd] bg-gradient-to-b from-white to-[#f0f0f0] pl-[1px] flex items-center">命令：画直线</span>
      <span class="flex-1 border border-[#ddd] bg-gradient-to-b from-white to-[#f0f0f0] pl-[1px] flex items-center">请选择下一点</span>
      <svg class="absolute right-0 bottom-0 w-[12px] h-[12px]" viewBox="0 0 12 12"><path d="M9 1h2v2H9zM6 4h2v2H6zM9 4h2v2H9zM3 7h2v2H3zM6 7h2v2H6zM9 7h2v2H9z" fill="#bbb"/></svg>
    </div>
  </div>

  <!-- define grid dialog -->
  <div class="absolute left-[756px] top-[399px] w-[409px] h-[221px] bg-[#efefef] flex flex-col shadow-[0_0_0_1px_#333] whitespace-nowrap">
    <div class="h-[25px] shrink-0 bg-white flex items-center justify-between pl-[3px] pr-[10px] text-[#8e8e8e]">定义网格
      <svg class="w-[10px] h-[10px]" viewBox="0 0 10 10"><path d="M0 0l10 10M10 0L0 10" stroke="#999"/></svg></div>
    <div class="relative h-[58px] mt-[22px] mx-[13px] border border-[#ddd] shrink-0 pl-[7px] pr-[9px] pt-[9px]">
      <span class="absolute left-[6px] top-[-9px] bg-[#efefef] pl-[1px] pr-[1px]">水平方向间距<span class="font-['DejaVu_Sans_Mono'] text-[10px]">(mm)=&gt;</span>间距<span class="font-['DejaVu_Sans_Mono'] text-[10px]">*</span>个数<span class="font-['DejaVu_Sans_Mono'] text-[10px]">,</span>间距<span class="font-['DejaVu_Sans_Mono'] text-[10px]">,</span>间距<span class="font-['DejaVu_Sans_Mono'] text-[10px]">*</span>个数<span class="font-['DejaVu_Sans_Mono'] text-[10px]">,</span>间距<span class="font-['DejaVu_Sans_Mono'] text-[10px]">,...</span></span>
      <div class="h-[41px] border border-[#777] bg-white pl-[1px] font-['DejaVu_Sans_Mono'] text-[10px] leading-[18px]">340,120,60</div>
    </div>
    <div class="relative h-[58px] mt-[15px] mx-[13px] border border-[#ddd] shrink-0 pl-[7px] pr-[9px] pt-[9px]">
      <span class="absolute left-[6px] top-[-9px] bg-[#efefef] pl-[1px] pr-[1px]">垂直方向间距<span class="font-['DejaVu_Sans_Mono'] text-[10px]">(mm)=&gt;</span>间距<span class="font-['DejaVu_Sans_Mono'] text-[10px]">*</span>个数<span class="font-['DejaVu_Sans_Mono'] text-[10px]">,</span>间距<span class="font-['DejaVu_Sans_Mono'] text-[10px]">,</span>间距<span class="font-['DejaVu_Sans_Mono'] text-[10px]">*</span>个数<span class="font-['DejaVu_Sans_Mono'] text-[10px]">,</span>间距<span class="font-['DejaVu_Sans_Mono'] text-[10px]">,...</span></span>
      <div class="h-[41px] border border-[#777] bg-white pl-[2px] leading-[17px]"><span class="font-['DejaVu_Sans_Mono'] text-[10px]">140,120</span>，<span class="font-['DejaVu_Sans_Mono'] text-[10px]">370,120</span>，<span class="font-['DejaVu_Sans_Mono'] text-[10px]">150,40,60</span></div>
    </div>
    <div class="flex justify-end gap-[15px] pr-[14px] mt-[13px]">
      <button class="w-[72px] h-[23px] border border-[#aaa] bg-[#e1e1e1]">确定</button>
      <button class="w-[72px] h-[23px] border border-[#aaa] bg-[#e1e1e1]">取消</button>
    </div>
  </div>

  <!-- annotations over the screenshot -->
  <svg class="absolute left-0 top-0 w-[1340px] h-[952px] pointer-events-none" viewBox="0 0 1340 952">
    <g fill="none" stroke="#ee3a43" stroke-width="3">
      <ellipse cx="300" cy="87" rx="25" ry="29" transform="rotate(-8 300 87)"/>
      <ellipse cx="406" cy="178.500" rx="39" ry="11"/>
      <ellipse cx="86" cy="434" rx="35" ry="25" transform="rotate(-6 86 434)"/>
    </g>
    <path d="M580 446.500L778 473.500 778 469 795 478 778 484.500 778 480 580 447.500z" fill="#ee3a3a"/>
    <path d="M657 497.500L807 526.500 807 522 823 533 807 537 807 532.500 657 498.500z" fill="#ee3a3a"/>
  </svg>

  <!-- network widget -->
  <div class="absolute left-[1173px] top-0 w-[126px] h-[44px]">
    <div class="absolute left-[20px] top-[1px] w-[106px] h-[39px] rounded-full bg-[#eeeeee] border border-[#ccc] shadow-[0_2px_4px_rgba(0,0,0,0.35)] flex">
      <div class="ml-[40px] mt-[4px] flex flex-col gap-[1px] text-[10px] leading-[14px] text-right w-[35px] text-[#333] whitespace-nowrap"><span>0.1K/s</span><span>955K/s</span></div>
    </div>
    <svg class="absolute left-[49px] top-[9px] w-[10px] h-[24px]" viewBox="0 0 10 24"><path d="M5 0l4 4H7v4H3V4H1z" fill="#ee5a44"/><path d="M3 15h4v4h2l-4 4-4-4h2z" fill="#34a853"/></svg>
    <svg class="absolute left-[100px] top-[8px] w-[22px] h-[22px]" viewBox="0 0 22 22"><circle cx="10" cy="13" r="8" fill="#3a7fd5"/><path d="M10 9v8M6 13h8" stroke="#fff" stroke-width="2"/><circle cx="16" cy="6" r="4" fill="#d8262c"/></svg>
    <div class="absolute left-0 top-0 w-[44px] h-[44px] rounded-full border-[2px] border-[#e8e8e8] overflow-hidden flex flex-col shadow-[0_1px_4px_rgba(0,0,0,0.5)]">
      <div class="h-[22px] bg-gradient-to-b from-[#2e8a55] to-[#0f6a3a]"></div>
      <div class="flex-1 bg-gradient-to-b from-[#64bc64] to-[#2e9e4a]"></div>
    </div>
    <span class="absolute left-0 top-[10px] w-[44px] text-center text-white text-[15px] leading-[20px]">44%</span>
  </div>
</div>
</body>
</html>
